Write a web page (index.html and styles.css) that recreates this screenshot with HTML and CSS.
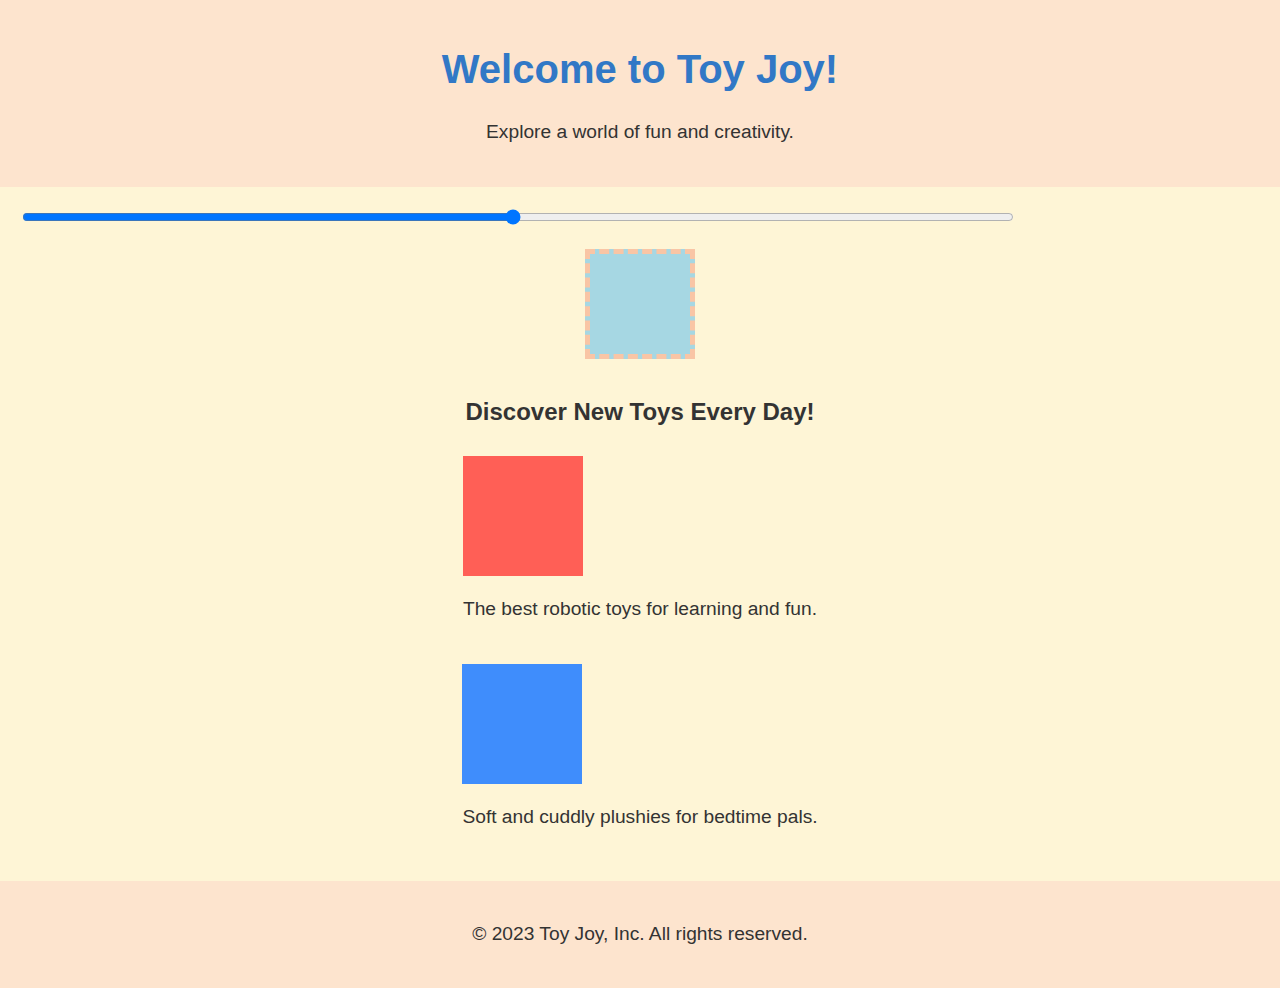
FILE: index.html
```html
<!DOCTYPE html>
<html lang="en">
<head>
<meta charset="utf-8">
<title>Toy Joy</title>
<link rel="stylesheet" href="styles.css">
</head>
<body>
<header class="site-header">
  <h1 class="title">Welcome to Toy Joy!</h1>
  <p class="tagline">Explore a world of fun and creativity.</p>
</header>
<main class="main">
  <input class="slider" type="range" min="1" max="100" value="50">
  <div class="feature-box"></div>
  <section class="toys">
    <h2 class="toys-title">Discover New Toys Every Day!</h2>
    <div class="toy">
      <div class="toy-pic toy-red"></div>
      <p class="toy-text">The best robotic toys for learning and fun.</p>
    </div>
    <div class="toy">
      <div class="toy-pic toy-blue"></div>
      <p class="toy-text">Soft and cuddly plushies for bedtime pals.</p>
    </div>
  </section>
</main>
<footer class="site-footer">
  <p class="copy">© 2023 Toy Joy, Inc. All rights reserved.</p>
</footer>
</body>
</html>
```

FILE: styles.css
```css
html, body {
  margin: 0;
  padding: 0;
}
body {
  font-family: "Liberation Sans", Arial, sans-serif;
  color: #333;
  background: #fef5d6;
}
.site-header {
  background: #fde4ce;
  text-align: center;
  padding: 20px 20px 44px;
}
.title {
  margin: 27px 0 29px;
  font-size: 40px;
  font-weight: bold;
  color: #3178c6;
}
.tagline {
  margin: 0;
  font-size: 19.2px;
}
.main {
  padding: 20px 20px 53px;
  background: #fef5d6;
}
.slider {
  display: block;
  width: 80%;
  margin: 2px;
}
.feature-box {
  width: 100px;
  height: 100px;
  margin: 24px auto 0;
  background: #a6d7e3;
  border: 5px dashed #f9c5a5;
}
.toys {
  display: flex;
  flex-direction: column;
  align-items: center;
}
.toys-title {
  margin: 39px 0 30px;
  font-size: 24px;
  font-weight: bold;
}
.toy {
  display: flex;
  flex-direction: column;
  align-items: flex-start;
}
.toy + .toy {
  margin-top: 44px;
}
.toy-pic {
  width: 120px;
  height: 120px;
}
.toy-red {
  background: #ff5f56;
}
.toy-blue {
  background: #3f8dfc;
}
.toy-text {
  margin: 22px 0 0;
  font-size: 19.2px;
}
.site-footer {
  background: #fde4ce;
  text-align: center;
  padding: 42px 20px 43px;
}
.copy {
  margin: 0;
  font-size: 19.2px;
}
```
